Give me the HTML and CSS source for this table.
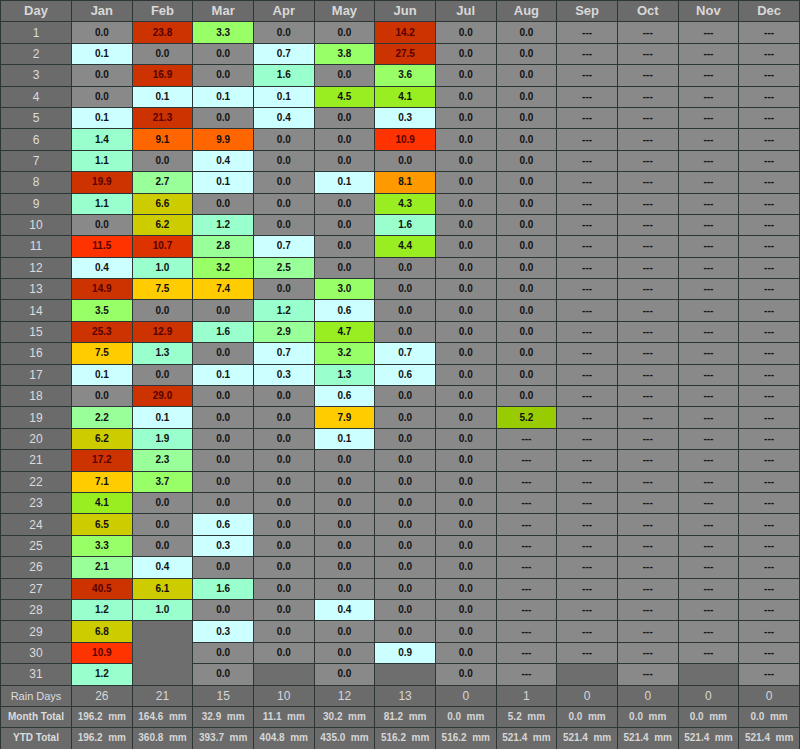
FILE: index.html
```html
<!DOCTYPE html>
<html>
<head>
<meta charset="utf-8">
<link rel="stylesheet" href="styles.css">
</head>
<body>
<table class="rain">
<colgroup><col class="cday"><col span="12"></colgroup>
<thead>
<tr class="hdr"><th>Day</th><th>Jan</th><th>Feb</th><th>Mar</th><th>Apr</th><th>May</th><th>Jun</th><th>Jul</th><th>Aug</th><th>Sep</th><th>Oct</th><th>Nov</th><th>Dec</th></tr>
</thead>
<tbody>
<tr><th>1</th><td class="z">0.0</td><td class="l">23.8</td><td class="d">3.3</td><td class="z">0.0</td><td class="z">0.0</td><td class="l">14.2</td><td class="z">0.0</td><td class="z">0.0</td><td class="z">---</td><td class="z">---</td><td class="z">---</td><td class="z">---</td></tr>
<tr><th>2</th><td class="a">0.1</td><td class="z">0.0</td><td class="z">0.0</td><td class="a">0.7</td><td class="d">3.8</td><td class="l">27.5</td><td class="z">0.0</td><td class="z">0.0</td><td class="z">---</td><td class="z">---</td><td class="z">---</td><td class="z">---</td></tr>
<tr><th>3</th><td class="z">0.0</td><td class="l">16.9</td><td class="z">0.0</td><td class="b">1.6</td><td class="z">0.0</td><td class="d">3.6</td><td class="z">0.0</td><td class="z">0.0</td><td class="z">---</td><td class="z">---</td><td class="z">---</td><td class="z">---</td></tr>
<tr><th>4</th><td class="z">0.0</td><td class="a">0.1</td><td class="a">0.1</td><td class="a">0.1</td><td class="e">4.5</td><td class="e">4.1</td><td class="z">0.0</td><td class="z">0.0</td><td class="z">---</td><td class="z">---</td><td class="z">---</td><td class="z">---</td></tr>
<tr><th>5</th><td class="a">0.1</td><td class="l">21.3</td><td class="z">0.0</td><td class="a">0.4</td><td class="z">0.0</td><td class="a">0.3</td><td class="z">0.0</td><td class="z">0.0</td><td class="z">---</td><td class="z">---</td><td class="z">---</td><td class="z">---</td></tr>
<tr><th>6</th><td class="b">1.4</td><td class="j">9.1</td><td class="j">9.9</td><td class="z">0.0</td><td class="z">0.0</td><td class="k">10.9</td><td class="z">0.0</td><td class="z">0.0</td><td class="z">---</td><td class="z">---</td><td class="z">---</td><td class="z">---</td></tr>
<tr><th>7</th><td class="b">1.1</td><td class="z">0.0</td><td class="a">0.4</td><td class="z">0.0</td><td class="z">0.0</td><td class="z">0.0</td><td class="z">0.0</td><td class="z">0.0</td><td class="z">---</td><td class="z">---</td><td class="z">---</td><td class="z">---</td></tr>
<tr><th>8</th><td class="l">19.9</td><td class="c">2.7</td><td class="a">0.1</td><td class="z">0.0</td><td class="a">0.1</td><td class="i">8.1</td><td class="z">0.0</td><td class="z">0.0</td><td class="z">---</td><td class="z">---</td><td class="z">---</td><td class="z">---</td></tr>
<tr><th>9</th><td class="b">1.1</td><td class="g">6.6</td><td class="z">0.0</td><td class="z">0.0</td><td class="z">0.0</td><td class="e">4.3</td><td class="z">0.0</td><td class="z">0.0</td><td class="z">---</td><td class="z">---</td><td class="z">---</td><td class="z">---</td></tr>
<tr><th>10</th><td class="z">0.0</td><td class="g">6.2</td><td class="b">1.2</td><td class="z">0.0</td><td class="z">0.0</td><td class="b">1.6</td><td class="z">0.0</td><td class="z">0.0</td><td class="z">---</td><td class="z">---</td><td class="z">---</td><td class="z">---</td></tr>
<tr><th>11</th><td class="k">11.5</td><td class="k2">10.7</td><td class="c">2.8</td><td class="a">0.7</td><td class="z">0.0</td><td class="e">4.4</td><td class="z">0.0</td><td class="z">0.0</td><td class="z">---</td><td class="z">---</td><td class="z">---</td><td class="z">---</td></tr>
<tr><th>12</th><td class="a">0.4</td><td class="b">1.0</td><td class="d">3.2</td><td class="c">2.5</td><td class="z">0.0</td><td class="z">0.0</td><td class="z">0.0</td><td class="z">0.0</td><td class="z">---</td><td class="z">---</td><td class="z">---</td><td class="z">---</td></tr>
<tr><th>13</th><td class="l">14.9</td><td class="h">7.5</td><td class="h">7.4</td><td class="z">0.0</td><td class="d">3.0</td><td class="z">0.0</td><td class="z">0.0</td><td class="z">0.0</td><td class="z">---</td><td class="z">---</td><td class="z">---</td><td class="z">---</td></tr>
<tr><th>14</th><td class="d">3.5</td><td class="z">0.0</td><td class="z">0.0</td><td class="b">1.2</td><td class="a">0.6</td><td class="z">0.0</td><td class="z">0.0</td><td class="z">0.0</td><td class="z">---</td><td class="z">---</td><td class="z">---</td><td class="z">---</td></tr>
<tr><th>15</th><td class="l">25.3</td><td class="l">12.9</td><td class="b">1.6</td><td class="c">2.9</td><td class="e">4.7</td><td class="z">0.0</td><td class="z">0.0</td><td class="z">0.0</td><td class="z">---</td><td class="z">---</td><td class="z">---</td><td class="z">---</td></tr>
<tr><th>16</th><td class="h">7.5</td><td class="b">1.3</td><td class="z">0.0</td><td class="a">0.7</td><td class="d">3.2</td><td class="a">0.7</td><td class="z">0.0</td><td class="z">0.0</td><td class="z">---</td><td class="z">---</td><td class="z">---</td><td class="z">---</td></tr>
<tr><th>17</th><td class="a">0.1</td><td class="z">0.0</td><td class="a">0.1</td><td class="a">0.3</td><td class="b">1.3</td><td class="a">0.6</td><td class="z">0.0</td><td class="z">0.0</td><td class="z">---</td><td class="z">---</td><td class="z">---</td><td class="z">---</td></tr>
<tr><th>18</th><td class="z">0.0</td><td class="l">29.0</td><td class="z">0.0</td><td class="z">0.0</td><td class="a">0.6</td><td class="z">0.0</td><td class="z">0.0</td><td class="z">0.0</td><td class="z">---</td><td class="z">---</td><td class="z">---</td><td class="z">---</td></tr>
<tr><th>19</th><td class="c">2.2</td><td class="a">0.1</td><td class="z">0.0</td><td class="z">0.0</td><td class="h">7.9</td><td class="z">0.0</td><td class="z">0.0</td><td class="f">5.2</td><td class="z">---</td><td class="z">---</td><td class="z">---</td><td class="z">---</td></tr>
<tr><th>20</th><td class="g">6.2</td><td class="b">1.9</td><td class="z">0.0</td><td class="z">0.0</td><td class="a">0.1</td><td class="z">0.0</td><td class="z">0.0</td><td class="z">---</td><td class="z">---</td><td class="z">---</td><td class="z">---</td><td class="z">---</td></tr>
<tr><th>21</th><td class="l">17.2</td><td class="c">2.3</td><td class="z">0.0</td><td class="z">0.0</td><td class="z">0.0</td><td class="z">0.0</td><td class="z">0.0</td><td class="z">---</td><td class="z">---</td><td class="z">---</td><td class="z">---</td><td class="z">---</td></tr>
<tr><th>22</th><td class="h">7.1</td><td class="d">3.7</td><td class="z">0.0</td><td class="z">0.0</td><td class="z">0.0</td><td class="z">0.0</td><td class="z">0.0</td><td class="z">---</td><td class="z">---</td><td class="z">---</td><td class="z">---</td><td class="z">---</td></tr>
<tr><th>23</th><td class="e">4.1</td><td class="z">0.0</td><td class="z">0.0</td><td class="z">0.0</td><td class="z">0.0</td><td class="z">0.0</td><td class="z">0.0</td><td class="z">---</td><td class="z">---</td><td class="z">---</td><td class="z">---</td><td class="z">---</td></tr>
<tr><th>24</th><td class="g">6.5</td><td class="z">0.0</td><td class="a">0.6</td><td class="z">0.0</td><td class="z">0.0</td><td class="z">0.0</td><td class="z">0.0</td><td class="z">---</td><td class="z">---</td><td class="z">---</td><td class="z">---</td><td class="z">---</td></tr>
<tr><th>25</th><td class="d">3.3</td><td class="z">0.0</td><td class="a">0.3</td><td class="z">0.0</td><td class="z">0.0</td><td class="z">0.0</td><td class="z">0.0</td><td class="z">---</td><td class="z">---</td><td class="z">---</td><td class="z">---</td><td class="z">---</td></tr>
<tr><th>26</th><td class="c">2.1</td><td class="a">0.4</td><td class="z">0.0</td><td class="z">0.0</td><td class="z">0.0</td><td class="z">0.0</td><td class="z">0.0</td><td class="z">---</td><td class="z">---</td><td class="z">---</td><td class="z">---</td><td class="z">---</td></tr>
<tr><th>27</th><td class="l">40.5</td><td class="g">6.1</td><td class="b">1.6</td><td class="z">0.0</td><td class="z">0.0</td><td class="z">0.0</td><td class="z">0.0</td><td class="z">---</td><td class="z">---</td><td class="z">---</td><td class="z">---</td><td class="z">---</td></tr>
<tr><th>28</th><td class="b">1.2</td><td class="b">1.0</td><td class="z">0.0</td><td class="z">0.0</td><td class="a">0.4</td><td class="z">0.0</td><td class="z">0.0</td><td class="z">---</td><td class="z">---</td><td class="z">---</td><td class="z">---</td><td class="z">---</td></tr>
<tr><th>29</th><td class="g">6.8</td><td class="x" rowspan="3"></td><td class="a">0.3</td><td class="z">0.0</td><td class="z">0.0</td><td class="z">0.0</td><td class="z">0.0</td><td class="z">---</td><td class="z">---</td><td class="z">---</td><td class="z">---</td><td class="z">---</td></tr>
<tr><th>30</th><td class="k">10.9</td><td class="z">0.0</td><td class="z">0.0</td><td class="z">0.0</td><td class="a">0.9</td><td class="z">0.0</td><td class="z">---</td><td class="z">---</td><td class="z">---</td><td class="z">---</td><td class="z">---</td></tr>
<tr><th>31</th><td class="b">1.2</td><td class="z">0.0</td><td class="x"></td><td class="z">0.0</td><td class="x"></td><td class="z">0.0</td><td class="z">---</td><td class="x"></td><td class="z">---</td><td class="x"></td><td class="z">---</td></tr>
</tbody>
<tfoot>
<tr class="cnt"><th>Rain Days</th><td>26</td><td>21</td><td>15</td><td>10</td><td>12</td><td>13</td><td>0</td><td>1</td><td>0</td><td>0</td><td>0</td><td>0</td></tr>
<tr><th>Month Total</th><td>196.2&nbsp; mm</td><td>164.6&nbsp; mm</td><td>32.9&nbsp; mm</td><td>11.1&nbsp; mm</td><td>30.2&nbsp; mm</td><td>81.2&nbsp; mm</td><td>0.0&nbsp; mm</td><td>5.2&nbsp; mm</td><td>0.0&nbsp; mm</td><td>0.0&nbsp; mm</td><td>0.0&nbsp; mm</td><td>0.0&nbsp; mm</td></tr>
<tr><th>YTD Total</th><td>196.2&nbsp; mm</td><td>360.8&nbsp; mm</td><td>393.7&nbsp; mm</td><td>404.8&nbsp; mm</td><td>435.0&nbsp; mm</td><td>516.2&nbsp; mm</td><td>516.2&nbsp; mm</td><td>521.4&nbsp; mm</td><td>521.4&nbsp; mm</td><td>521.4&nbsp; mm</td><td>521.4&nbsp; mm</td><td>521.4&nbsp; mm</td></tr>
</tfoot>
</table>
</body>
</html>
```

FILE: styles.css
```css
html, body {
  margin: 0;
  padding: 0;
  background: #6a6a6a;
}
.rain {
  width: 800px;
  border-collapse: collapse;
  table-layout: fixed;
  font-family: "Liberation Sans", Arial, sans-serif;
  border: 1px solid #2c3634;
}
.rain tr { height: 21.4px; }
.cday { width: 71px; }
.rain th, .rain td {
  border: 1px solid #2c3634;
  padding: 0;
  text-align: center;
  vertical-align: middle;
  white-space: nowrap;
  overflow: hidden;
  line-height: 12px;
}
.rain th {
  background: #6b6b6b;
  color: #dcdcdc;
  font-weight: normal;
  font-size: 12px;
}
.rain .hdr th {
  font-weight: bold;
  font-size: 13px;
  color: #d8d8d8;
}
.rain td {
  background: #898989;
  color: #111;
  font-weight: bold;
  font-size: 10px;
}
.rain tfoot th {
  font-weight: bold;
  font-size: 10px;
}
.rain tfoot tr.cnt th {
  font-weight: normal;
  font-size: 11px;
}
.rain tfoot td {
  background: #6b6b6b;
  color: #d6d6d6;
  font-weight: bold;
  font-size: 10px;
}
.rain tfoot tr.cnt td {
  font-weight: normal;
  font-size: 12px;
}
.rain td.a { background: #ccffff; }
.rain td.b { background: #99ffcc; }
.rain td.c { background: #99ff99; }
.rain td.d { background: #99ff66; }
.rain td.e { background: #99ee22; }
.rain td.f { background: #99cc00; }
.rain td.g { background: #cccc00; }
.rain td.h { background: #ffcc00; }
.rain td.i { background: #ff9900; }
.rain td.j { background: #ff6600; }
.rain td.k { background: #ff3300; color: #550000; }
.rain td.k2 { background: #dd3300; color: #550000; }
.rain td.l { background: #cc3300; color: #550000; }
.rain td.x { background: #6e6e6e; }
```
